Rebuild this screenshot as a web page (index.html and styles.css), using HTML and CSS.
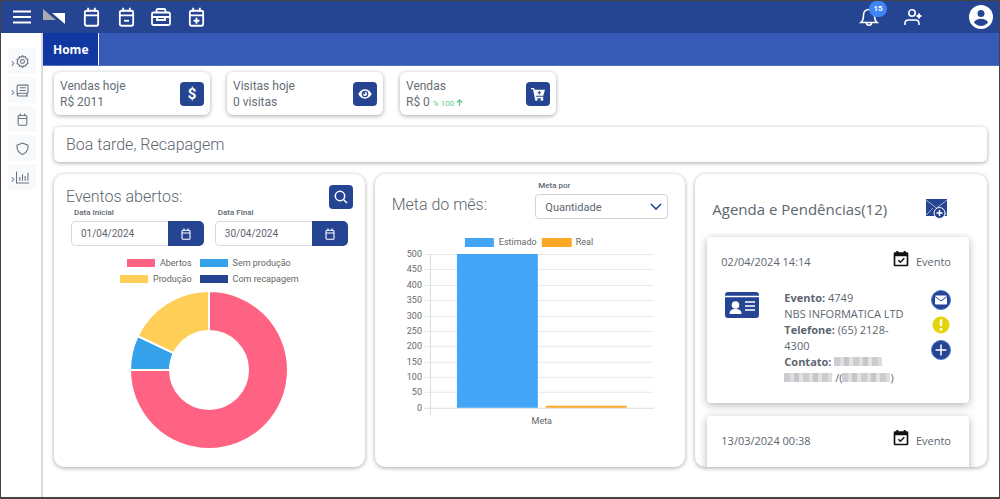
FILE: index.html
```html
<!DOCTYPE html>
<html lang="pt-BR">
<head>
<meta charset="utf-8">
<meta name="viewport" content="width=device-width, initial-scale=1">
<title>Home</title>
<link rel="stylesheet" href="styles.css">
</head>
<body>
<svg class="sprite" aria-hidden="true">
  <symbol id="calendar" viewBox="0 0 20 24"><path d="M4 4.500h12a2 2 0 0 1 2 2v14a2 2 0 0 1-2 2H4a2 2 0 0 1-2-2v-14a2 2 0 0 1 2-2zM2 10h16M6 1v5M14 1v5"/></symbol>
  <symbol id="event-check" viewBox="0 0 24 24"><path fill="currentColor" fill-rule="evenodd" d="M5 0h3v2h8V0h3v2h2a2 2 0 0 1 2 2v17a2 2 0 0 1-2 2H3a2 2 0 0 1-2-2V4a2 2 0 0 1 2-2h2zM3.500 8v12.500h17V8z"/><path d="M8 14l3 3 6-6" fill="none" stroke="currentColor" stroke-width="2.200"/></symbol>
</svg>
<div class="app">
  <header class="topbar">
    <button class="icon-btn menu" aria-label="Menu"><svg viewBox="0 0 18 14" width="18" height="14" class="line"><path d="M0 1.500h18M0 7h18M0 12.500h18"/></svg></button>
    <svg class="logo" viewBox="0 0 24 16" width="24" height="16" aria-hidden="true"><path fill="#a9abb0" d="M1 0v11h13z"/><path fill="#fff" d="M10 4h13v11z"/></svg>
    <nav class="shortcuts" aria-label="Atalhos">
      <button class="icon-btn" aria-label="Calendário"><svg viewBox="0 0 20 24" width="17" height="20" class="line bold"><use href="#calendar"/></svg></button>
      <button class="icon-btn" aria-label="Remover evento"><svg viewBox="0 0 20 24" width="17" height="20" class="line bold"><use href="#calendar"/><path d="M7 16.500h6"/></svg></button>
      <button class="icon-btn" aria-label="Negócios"><svg viewBox="0 0 20 20" width="20" height="20" class="line mid"><path stroke-width="1.800" d="M2.500 5.500h15A1.500 1.500 0 0 1 19 7v9.500a1.500 1.500 0 0 1-1.500 1.500h-15A1.500 1.500 0 0 1 1 16.500V7a1.500 1.500 0 0 1 1.500-1.500zM5.500 5.500V3.500a1.500 1.500 0 0 1 1.500-1.500h6a1.500 1.500 0 0 1 1.500 1.500v2M1 10h18M6 10v3h8v-3"/></svg></button>
      <button class="icon-btn" aria-label="Novo evento"><svg viewBox="0 0 20 24" width="17" height="20" class="line bold"><use href="#calendar"/><path d="M6.500 16.500h7M10 13v7"/></svg></button>
    </nav>
    <div class="account">
      <button class="icon-btn bell" aria-label="Notificações"><svg viewBox="0 0 20 20" width="20" height="20" class="line mid"><path d="M2 15.500h16c-2-1.500-2.500-3-2.500-7.500 0-3-2-5.500-5.500-5.500S4.500 5 4.500 8c0 4.500-.5 6-2.500 7.500zM7.500 16c0 3 5 3 5 0"/></svg><span class="badge">15</span></button>
      <button class="icon-btn add-user" aria-label="Adicionar usuário"><svg viewBox="0 0 20 18" width="20" height="18" class="line mid"><circle cx="9" cy="5" r="3.200"/><path d="M2 17v-1.500c0-2.500 1.500-3.500 3.500-3.500h7c2 0 3.500 1 3.500 3.500V17"/><path stroke-width="2" d="M16 5.500v5M13.500 8h5"/></svg></button>
      <button class="icon-btn" aria-label="Perfil"><svg viewBox="0 0 24 24" width="24" height="24"><circle cx="12" cy="12" r="12" fill="#fff"/><circle cx="12" cy="8.500" r="3.500" fill="#254492"/><path fill="#254492" d="M5 17.500c2-5 12-5 14 0-3.500 4.500-10.500 4.500-14 0z"/></svg></button>
    </div>
  </header>

  <div class="shell">
    <nav class="sidebar" aria-label="Principal">
      <button class="side-btn" aria-label="Configurações"><span class="caret">›</span><svg viewBox="0 0 24 24" width="13" height="13" class="line"><path d="M12 1l2 3 3.500-1 1 3.500L22 8l-1 4 1 4-3.500 1.500-1 3.500-3.500-1-2 3-2-3-3.500 1-1-3.500L2 16l1-4-1-4 3.500-1.500 1-3.500L10 4z"/><circle cx="12" cy="12" r="3.600"/></svg></button>
      <button class="side-btn" aria-label="Cadastros"><span class="caret">›</span><svg viewBox="0 0 24 24" width="13" height="13" class="line"><path d="M22 17V2H5a3 3 0 0 0-3 3v14a3 3 0 0 0 3 3h17M22 17H5a2.500 2.500 0 0 0 0 5M20 17v5M7 7h11M7 12h11"/></svg></button>
      <button class="side-btn" aria-label="Agenda"><svg viewBox="0 0 20 24" width="11" height="13" class="line"><use href="#calendar"/></svg></button>
      <button class="side-btn" aria-label="Segurança"><svg viewBox="0 0 24 24" width="13" height="13" class="line"><path d="M12 2l10 4c1 8-3 14-10 17C5 20 1 14 2 6z"/></svg></button>
      <button class="side-btn" aria-label="Relatórios"><span class="caret">›</span><svg viewBox="0 0 24 24" width="13" height="13" class="line"><path d="M1 1v21h23M7 18v-7M12 18V6M17 18V9M22 18V3"/></svg></button>
    </nav>

    <div class="page">
      <div class="tabs"><a class="tab" href="#home" aria-current="page">Home</a></div>
      <main class="content">
        <section class="stats" aria-label="Resumo">
          <article class="stat"><div>Vendas hoje<br>R$ 2011</div><span class="tile dollar">$</span></article>
          <article class="stat"><div>Visitas hoje<br>0 visitas</div><span class="tile"><svg viewBox="0 0 24 16" width="14" height="10"><path fill="#fff" d="M12 0c5 0 9 3 11.500 8C21 13 17 16 12 16S3 13 .5 8C3 3 7 0 12 0z"/><circle cx="12" cy="8" r="5.600" fill="#254492"/><circle cx="12" cy="8" r="3.600" fill="#fff"/><circle cx="10.500" cy="6.500" r="1.800" fill="#254492"/></svg></span></article>
          <article class="stat"><div>Vendas<br>R$ 0 <small class="trend">% 100 <svg viewBox="0 0 8 8" width="7" height="7" class="line"><path d="M4 8V1M1 4l3-3 3 3"/></svg></small></div><span class="tile"><svg viewBox="0 0 16 16" width="14" height="14"><path fill="#fff" d="M0 1h3.500L4 3h12l-2 7H5.500l.3 1.200H14v1.600H4.400L2.300 2.600H0z"/><circle cx="6" cy="14.200" r="1.600" fill="#fff"/><circle cx="12.500" cy="14.200" r="1.600" fill="#fff"/><path d="M9.500 4.500v4M7.500 6.500h4" stroke="#254492" stroke-width="1.200"/></svg></span></article>
        </section>

        <h1 class="greeting">Boa tarde, Recapagem</h1>

        <div class="panels">
          <section class="panel events">
            <div class="panel-head"><h2>Eventos abertos:</h2><button class="tile" aria-label="Pesquisar"><svg viewBox="0 0 14 14" width="14" height="14" class="line"><circle cx="6" cy="6" r="4.700"/><path d="M9.500 9.500l3.500 3.500"/></svg></button></div>
            <div class="dates">
              <div><label for="start">Data Inicial</label><div class="date-box"><input id="start" type="text" value="01/04/2024"><button aria-label="Abrir calendário inicial"><svg viewBox="0 0 20 24" width="10" height="12" class="line bold"><use href="#calendar"/></svg></button></div></div>
              <div><label for="end">Data Final</label><div class="date-box"><input id="end" type="text" value="30/04/2024"><button aria-label="Abrir calendário final"><svg viewBox="0 0 20 24" width="10" height="12" class="line bold"><use href="#calendar"/></svg></button></div></div>
            </div>
            <ul class="legend">
              <li><i class="swatch pink"></i>Abertos</li><li><i class="swatch blue"></i>Sem produção</li>
              <li><i class="swatch yellow"></i>Produção</li><li><i class="swatch navy"></i>Com recapagem</li>
            </ul>
            <svg class="donut" viewBox="0 0 160 160" role="img" aria-label="Eventos abertos">
              <g stroke="#fff" stroke-width="2">
                <path fill="#ff6384" d="M80 1A79 79 0 1 1 1 80H41A39 39 0 1 0 80 41z"/>
                <path fill="#36a2eb" d="M1 80A79 79 0 0 1 8.700 46L44.800 63.200A39 39 0 0 0 41 80z"/>
                <path fill="#ffce56" d="M8.700 46A79 79 0 0 1 80 1V41A39 39 0 0 0 44.800 63.200z"/>
              </g>
            </svg>
          </section>

          <section class="panel goal">
            <div class="goal-head">
              <h2>Meta do mês:</h2>
              <div class="goal-field"><label for="goal">Meta por</label>
                <div class="select-box"><select id="goal"><option>Quantidade</option></select><svg viewBox="0 0 12 8" width="12" height="8"><path d="M1 1l5 5 5-5" fill="none" stroke="#254492" stroke-width="1.600"/></svg></div>
              </div>
            </div>
            <svg class="bars" viewBox="0 0 277 196" role="img" aria-label="Meta: estimado e real">
              <path fill="#42a5f5" d="M73 5h29v9H73z"/><text x="107" y="12">Estimado</text>
              <path fill="#ffa726" d="M150 5h30v9h-30z"/><text x="184" y="12">Real</text>
              <path class="grid" d="M32 21.500h230M32 36.500h230M32 52.500h230M32 67.500h230M32 83.500h230M32 98.500h230M32 113.500h230M32 129.500h230M32 144.500h230M32 159.500h230"/>
              <path class="axis" d="M32 175.500h230M38.500 21v161"/>
              <path fill="#42a5f5" d="M65 21h81v154H65z"/><path fill="#ffa726" d="M154 173h81v2h-81z"/>
              <g text-anchor="end"><text x="30" y="24">500</text><text x="30" y="39">450</text><text x="30" y="55">400</text><text x="30" y="70">350</text><text x="30" y="86">300</text><text x="30" y="101">250</text><text x="30" y="116">200</text><text x="30" y="132">150</text><text x="30" y="147">100</text><text x="30" y="162">50</text><text x="30" y="178">0</text></g>
              <text x="150" y="191" text-anchor="middle">Meta</text>
            </svg>
          </section>

          <section class="panel agenda">
            <div class="agenda-head"><h2>Agenda e Pendências(12)</h2>
              <button class="icon-btn" aria-label="Nova mensagem"><svg viewBox="0 0 21 20" width="21" height="20"><path fill="#254492" d="M0 0h21v17H0z"/><path d="M0 1l10.500 8L21 1M0 16l7-7M21 16l-7-7" fill="none" stroke="#fff" stroke-width=".6"/><circle cx="13.500" cy="14" r="5.500" fill="#254492" stroke="#fff"/><path d="M13.500 11v6M10.500 14h6" stroke="#fff" stroke-width="1.400"/></svg></button>
            </div>
            <div class="agenda-list">
              <article class="event">
                <div class="event-head"><time>02/04/2024 14:14</time><span class="kind"><svg width="16" height="16"><use href="#event-check"/></svg>Evento</span></div>
                <div class="event-body">
                  <svg class="id-card" viewBox="0 0 34 26" width="34" height="26"><rect width="34" height="26" rx="3" fill="#254492"/><path stroke="#fff" stroke-width="1.500" d="M0 4.500h34M20 10h10M20 14h10M20 18h10"/><circle cx="10.500" cy="13" r="3.800" fill="#fff"/><path fill="#fff" d="M4.500 22c0-4 2.500-5 6-5s6 1 6 5z"/></svg>
                  <p><b>Evento:</b> 4749<br>NBS INFORMATICA LTD<br><b>Telefone:</b> (65) 2128-<br>4300<br><b>Contato:</b> <span class="masked"></span><br><span class="masked"></span> /(<span class="masked"></span>)</p>
                  <div class="actions">
                    <button aria-label="Enviar mensagem"><svg viewBox="0 0 20 20" width="20" height="20"><circle cx="10" cy="10" r="9.500" fill="#254492" stroke="#4779d0"/><rect x="4" y="5.500" width="12" height="9" rx="1" fill="#fff"/><path d="M4 6.500l6 4.500 6-4.500" fill="none" stroke="#254492"/></svg></button>
                    <button aria-label="Alerta"><svg viewBox="0 0 20 20" width="20" height="20"><circle cx="10" cy="10" r="8.500" fill="#e6d40a"/><path stroke="#fff" stroke-width="2.400" d="M10 4.500v6.500M10 13v2.400"/></svg></button>
                    <button aria-label="Adicionar"><svg viewBox="0 0 20 20" width="20" height="20"><circle cx="10" cy="10" r="9.500" fill="#254492" stroke="#4779d0"/><path stroke="#fff" stroke-width="1.500" d="M10 4.500v11M4.500 10h11"/></svg></button>
                  </div>
                </div>
              </article>
              <article class="event">
                <div class="event-head"><time>13/03/2024 00:38</time><span class="kind"><svg width="16" height="16"><use href="#event-check"/></svg>Evento</span></div>
                <div class="event-body"></div>
              </article>
            </div>
          </section>
        </div>
      </main>
    </div>
  </div>
</div>
</body>
</html>
```
FILE: styles.css
```css
* { box-sizing: border-box; }
body { margin: 0; font-family: Roboto, "Open Sans", sans-serif; color: #5d6670; background: #fff; }
button, input, select { font: inherit; color: inherit; }
button { padding: 0; border: 0; background: none; cursor: pointer; }
h1, h2, p, ul { margin: 0; padding: 0; font-weight: 300; }
svg { display: block; flex: none; }
.sprite { position: absolute; width: 0; height: 0; }
.line { fill: none; stroke: currentColor; stroke-width: 1.5; }
.mid { stroke-width: 1.6; }
.bold { stroke-width: 2.2; }
.menu .line { stroke-width: 2; }

.app { display: flex; flex-direction: column; min-height: 100vh; border: 1px solid #444; border-bottom-width: 2px; }
.topbar { display: flex; align-items: center; height: 32px; padding: 0 6px 0 12px; background: #254492; color: #fff; }
.icon-btn { display: flex; align-items: center; justify-content: center; }
.logo { margin-left: 11px; }
.shortcuts { display: flex; gap: 15px; margin-left: 15px; }
.shortcuts .icon-btn { width: 20px; }
.account { display: flex; align-items: center; margin-left: auto; }
.bell { position: relative; margin-right: 24px; }
.badge { position: absolute; left: 10px; top: -6px; width: 18px; border-radius: 9px; background: #3f86f5; font-size: 8px; line-height: 16px; font-weight: 700; }
.add-user { margin-right: 46px; }

.shell { display: flex; flex: 1; }
.sidebar { display: flex; flex-direction: column; gap: 3px; width: 42px; padding: 15px 7px; border-right: 2px solid #d9dadd; }
.side-btn { position: relative; display: flex; align-items: center; justify-content: center; width: 28px; height: 26px; background: #f8f9fa; color: #6b7280; }
.side-btn .line { stroke-width: 2; }
.caret { position: absolute; left: 3px; top: 9px; font-size: 12px; line-height: 12px; color: #526c9f; }

.page { display: flex; flex: 1; flex-direction: column; min-width: 0; }
.tabs { display: flex; height: 33px; background: #375ab7; border-bottom: 1px solid #5573c5; }
.tab { padding: 0 10px; background: #1137a3; border-right: 1px solid #fff; color: #fff; font: 700 12px/34px "Open Sans", sans-serif; text-decoration: none; }
.content { display: flex; flex: 1; flex-direction: column; gap: 12px; padding: 6px 12px 30px 11px; }
.stat, .greeting, .panel { background: #fff; box-shadow: 0 1px 4px rgba(0, 0, 0, .35); }
.stats { display: flex; gap: 17px; }
.stat { display: flex; align-items: center; justify-content: space-between; width: 156px; height: 43px; padding: 1px 6px 0; border-radius: 6px; font-size: 12px; line-height: 16px; color: #666e77; }
.trend { font-size: 8px; line-height: 8px; color: #67c58b; }
.trend svg { display: inline-block; }
.tile { display: flex; align-items: center; justify-content: center; width: 24px; height: 24px; border-radius: 4px; background: #254492; color: #fff; }
.dollar { font-size: 15px; font-weight: 700; }
.greeting { padding: 1px 12px 0; border-radius: 5px; font-size: 16px; line-height: 34px; }
.panels { display: grid; flex: 1; grid-template-columns: 311fr 311fr 292fr; column-gap: 10px; }
.panel { min-width: 0; border-radius: 10px; overflow: hidden; }
h2 { font-size: 16px; line-height: 24px; }
label { display: block; padding-left: 3px; font-size: 8px; font-weight: 500; line-height: 10px; margin-bottom: 3px; }

.events { padding: 11px 12px; }
.panel-head { display: flex; justify-content: space-between; height: 23px; }
.dates { display: grid; grid-template-columns: repeat(2, minmax(0, 1fr)); gap: 11px; padding: 0 5px; }
.date-box { display: flex; height: 25px; }
.date-box input { flex: 1; width: 0; min-width: 0; padding: 0 9px; border: 1px solid #d6dae0; border-right: 0; border-radius: 5px 0 0 5px; font-size: 10px; }
.date-box button { display: flex; align-items: center; justify-content: center; width: 36px; border-radius: 0 5px 5px 0; background: #254492; color: #fff; }
.legend { display: grid; grid-template-columns: auto auto; justify-content: center; column-gap: 8px; margin: 9px 0 3px; list-style: none; font-size: 9px; font-weight: 400; line-height: 16px; color: #666; }
.legend li { display: flex; align-items: center; gap: 5px; }
.legend li:nth-child(odd) { justify-content: flex-end; }
.swatch { width: 28px; height: 8px; }
.pink { background: #ff6384; }
.blue { background: #36a2eb; }
.yellow { background: #ffce56; }
.navy { background: #254492; }
.donut { width: 160px; margin: 0 auto; }

.goal { padding: 7px 17px; }
.goal-head { display: flex; align-items: flex-end; justify-content: space-between; margin-bottom: 14px; }
.goal-head h2 { line-height: 28px; }
.goal-field { width: 133px; }
.select-box { position: relative; }
.select-box select { display: block; width: 100%; height: 25px; padding: 2px 9px 0; appearance: none; border: 1px solid #ced4da; border-radius: 4px; background: #fff; font-size: 11px; }
.select-box svg { position: absolute; right: 6px; top: 9px; pointer-events: none; }
.bars { width: 100%; }
.bars text { font-size: 9px; fill: #666; }
.grid { stroke: #e9e9e9; }
.axis { stroke: #dcdcdc; fill: none; }

.agenda { display: flex; flex-direction: column; font-family: "Open Sans", "Noto Sans", sans-serif; }
.agenda-head { display: flex; align-items: center; justify-content: space-between; height: 59px; padding: 10px 40px 0 17px; }
.agenda-head h2 { font-size: 15px; font-weight: 400; }
.agenda-list { flex: 1; contain: size; overflow-y: auto; scrollbar-width: none; padding: 4px 18px 12px 12px; }
.event { margin-bottom: 13px; padding: 14px 18px 17px 14px; border-radius: 4px; box-shadow: 0 2px 8px rgba(0, 0, 0, .3); font-size: 11px; }
.event-head { display: flex; align-items: center; justify-content: space-between; height: 20px; }
.kind { display: flex; align-items: center; gap: 7px; }
.kind svg { color: #111; margin-bottom: 4px; }
.event-body { display: grid; grid-template-columns: 34px 1fr 20px; column-gap: 25px; min-height: 96px; margin-top: 19px; padding-left: 4px; }
.event-body p { font-weight: 400; line-height: 16px; white-space: nowrap; }
.id-card { margin-top: 2px; }
.actions { display: flex; flex-direction: column; gap: 5px; }
.masked { display: inline-block; width: 48px; height: 9px; background: repeating-linear-gradient(90deg, #cbcdd0 0 6px, #dedede 6px 10px, #c3c6ca 10px 15px, #e5e1df 15px 19px); }
```
